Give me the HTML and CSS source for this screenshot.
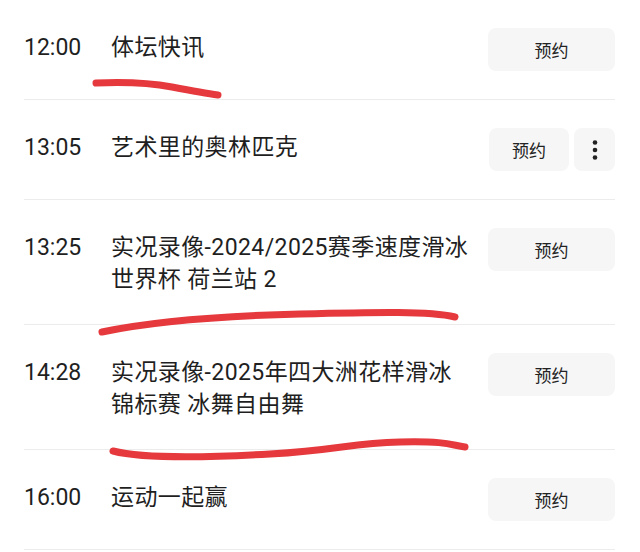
FILE: index.html
```html
<!DOCTYPE html>
<html lang="zh-CN">
<head>
<meta charset="utf-8">
<title>节目单</title>
<link rel="stylesheet" href="styles.css">
</head>
<body>
<div class="page">
  <ul class="list">
    <li class="row">
      <span class="time">12:00</span>
      <span class="title">体坛快讯</span>
      <div class="actions"><button class="btn btn-wide">预约</button></div>
    </li>
    <li class="row">
      <span class="time">13:05</span>
      <span class="title">艺术里的奥林匹克</span>
      <div class="actions">
        <button class="btn btn-narrow">预约</button>
        <button class="btn btn-more" aria-label="更多"><svg width="6" height="22" viewBox="0 0 6 22"><circle cx="3" cy="3.5" r="2.3" fill="#222"/><circle cx="3" cy="11" r="2.3" fill="#222"/><circle cx="3" cy="18.5" r="2.3" fill="#222"/></svg></button>
      </div>
    </li>
    <li class="row">
      <span class="time">13:25</span>
      <span class="title">实况录像-2024/2025赛季速度滑冰<br>世界杯 荷兰站 2</span>
      <div class="actions"><button class="btn btn-wide">预约</button></div>
    </li>
    <li class="row">
      <span class="time">14:28</span>
      <span class="title">实况录像-2025年四大洲花样滑冰<br>锦标赛 冰舞自由舞</span>
      <div class="actions"><button class="btn btn-wide">预约</button></div>
    </li>
    <li class="row">
      <span class="time">16:00</span>
      <span class="title">运动一起赢</span>
      <div class="actions"><button class="btn btn-wide">预约</button></div>
    </li>
  </ul>
  <svg class="marks" width="640" height="552" viewBox="0 0 640 552">
    <path d="M96 83 Q 140 81 172 87 T 218 95"/>
    <path d="M102 332 C 150 322, 220 316, 300 314 S 430 311 455 317"/>
    <path d="M113 451 C 140 458, 200 458, 270 454 S 350 443 400 442 S 450 445 465 447"/>
  </svg>
</div>
</body>
</html>
```

FILE: styles.css
```css
html, body {
  margin: 0;
  padding: 0;
  background: #ffffff;
}
.page {
  position: relative;
  width: 640px;
  height: 552px;
  overflow: hidden;
  font-family: Roboto, "Noto Sans CJK SC", sans-serif;
  color: #1f1f1f;
}
.list {
  list-style: none;
  margin: 0 0 0 24px;
  padding: 0;
  width: 591px;
}
.row {
  display: flex;
  align-items: flex-start;
  padding: 28px 0 28px 0;
  border-bottom: 1px solid #ececec;
}
.time {
  width: 87px;
  flex: none;
  font-size: 23px;
  line-height: 32px;
  margin-top: 4px;
}
.title {
  flex: 1;
  font-size: 23px;
  line-height: 32px;
  letter-spacing: 0.4px;
  margin-top: 4px;
  margin-right: 8px;
  white-space: nowrap;
}
.actions {
  flex: none;
  display: flex;
  gap: 5px;
}
.btn {
  height: 43px;
  border: none;
  border-radius: 8px;
  background: #f6f6f6;
  font-family: Roboto, "Noto Sans CJK SC", sans-serif;
  font-size: 17px;
  color: #222;
  padding: 0;
  display: flex;
  align-items: center;
  justify-content: center;
}
.btn-wide { width: 127px; }
.btn-narrow { width: 80px; }
.btn-more { width: 41px; }
.marks {
  position: absolute;
  left: 0;
  top: 0;
  pointer-events: none;
}
.marks path {
  fill: none;
  stroke: #e5393e;
  stroke-width: 7;
  stroke-linecap: round;
}
```
